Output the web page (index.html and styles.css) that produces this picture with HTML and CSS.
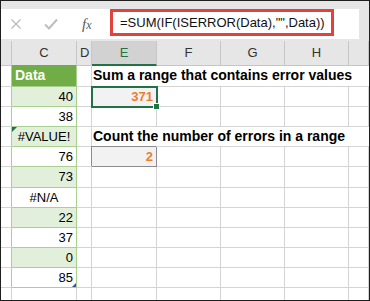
FILE: index.html
```html
<!DOCTYPE html>
<html lang="en">
<head>
    <meta charset="UTF-8">
    <title>SUM ignoring errors</title>
    <link rel="stylesheet" href="styles.css">
</head>
<body>
    <div class="frame">
        <div class="band"></div>

        <!-- formula bar -->
        <div class="fbar">
            <div class="fbar-icons">
                <svg class="ico-x" width="12" height="12" viewBox="0 0 12 12">
                    <path d="M1.5 1.5 L10.5 10.5 M10.5 1.5 L1.5 10.5" stroke="#bdbdbd" stroke-width="1.4" fill="none"/>
                </svg>
                <svg class="ico-ok" width="14" height="12" viewBox="0 0 14 12">
                    <path d="M1 6.5 L5 10.5 L13 1.5" stroke="#bdbdbd" stroke-width="2" fill="none"/>
                </svg>
                <span class="fx">f<span>x</span></span>
            </div>
            <div class="formula">=SUM(IF(ISERROR(Data),"",Data))</div>
        </div>

        <div class="sheet">
            <div class="row head">
                <div></div><div>C</div><div>D</div><div class="sel">E</div><div>F</div><div>G</div><div>H</div><div></div>
            </div>
            <div class="row r1 tbl">
                <div></div><div class="c th">Data</div><div></div>
                <div class="title">Sum a range that contains error values</div>
            </div>
            <div class="row tbl">
                <div></div><div class="c band-g">40</div><div></div>
                <div class="num active">371<span class="handle"></span></div>
                <div></div><div></div><div></div><div></div>
            </div>
            <div class="row tbl">
                <div></div><div class="c">38</div><div></div>
                <div></div><div></div><div></div><div></div><div></div>
            </div>
            <div class="row tbl">
                <div></div><div class="c band-g err">#VALUE!<span class="flag"></span></div><div></div>
                <div class="title">Count the number of errors in a range</div>
            </div>
            <div class="row tbl">
                <div></div><div class="c">76</div><div></div>
                <div class="num boxed">2</div>
                <div></div><div></div><div></div><div></div>
            </div>
            <div class="row tbl tall">
                <div></div><div class="c band-g">73</div><div></div>
                <div></div><div></div><div></div><div></div><div></div>
            </div>
            <div class="row tbl">
                <div></div><div class="c err">#N/A</div><div></div>
                <div></div><div></div><div></div><div></div><div></div>
            </div>
            <div class="row tbl">
                <div></div><div class="c band-g">22</div><div></div>
                <div></div><div></div><div></div><div></div><div></div>
            </div>
            <div class="row tbl">
                <div></div><div class="c">37</div><div></div>
                <div></div><div></div><div></div><div></div><div></div>
            </div>
            <div class="row tbl">
                <div></div><div class="c band-g">0</div><div></div>
                <div></div><div></div><div></div><div></div><div></div>
            </div>
            <div class="row tbl">
                <div></div><div class="c last">85<span class="resize"></span></div><div></div>
                <div></div><div></div><div></div><div></div><div></div>
            </div>
            <div class="row">
                <div></div><div></div><div></div>
                <div></div><div></div><div></div><div></div><div></div>
            </div>
        </div>
    </div>
</body>
</html>
```

FILE: styles.css
```css
body {
    margin: 0;
    font-family: "Liberation Sans", Arial, sans-serif;
}
.frame {
    width: 370px;
    height: 301px;
    box-sizing: border-box;
    border: 1px solid #1e1e1e;
    background-color: #e6e6e6;
    overflow: hidden;
}
.band {
    height: 8px;
}

/* formula bar */
.fbar {
    display: flex;
    height: 30px;
    margin-right: 10px;
    background-color: white;
}
.fbar-icons {
    width: 109px;
    display: flex;
    align-items: center;
}
.ico-x {
    margin-left: 9px;
}
.ico-ok {
    margin-left: 22px;
}
.fx {
    margin-left: 24px;
    font-family: "Liberation Serif", serif;
    font-style: italic;
    font-size: 15px;
    color: #595959;
}
.fx span {
    font-size: 12px;
}
.formula {
    width: 224px;
    height: 27px;
    box-sizing: border-box;
    border: 3px solid #e2413c;
    padding-left: 7px;
    font-size: 13px;
    line-height: 21px;
    color: #111;
}

.sheet {
    margin-top: 2px;
    background-color: white;
}
.row {
    display: grid;
    grid-template-columns: 11px 65px 15px 65px 64px 64px 64px 1fr;
    height: 20px;
}
.row > div {
    box-sizing: border-box;
    border-right: 1px solid #d4d4d4;
    border-bottom: 1px solid #d4d4d4;
    font-size: 13px;
    line-height: 19px;
    padding: 0 3px;
    white-space: nowrap;
    position: relative;
}
.row.r1 {
    height: 22px;
}
.row.r1 > div {
    line-height: 21px;
}
.row.tall {
    height: 21px;
}

/* column headers */
.row.head {
    height: 24px;
    background-color: #e6e6e6;
}
.row.head > div {
    border-right-color: #c6c6c6;
    border-bottom-color: #c6c6c6;
    text-align: center;
    line-height: 23px;
    color: #333;
}
.row.head > .sel {
    background-color: #d2d2d2;
    color: #217346;
    border-bottom: 2px solid #217346;
}

/* table in column C */
.tbl > div:first-child {
    border-right-color: #a9d08e;
}
.c {
    text-align: right;
    border-right-color: #a9d08e !important;
    border-bottom-color: #a9d08e !important;
}
.c.th {
    background-color: #70ad47;
    color: white;
    font-weight: bold;
    font-size: 14px;
    text-align: left;
}
.band-g {
    background-color: #e2efda;
}
.c.err {
    text-align: center;
}
.flag {
    position: absolute;
    left: 0;
    top: 0;
    border-top: 5px solid #217346;
    border-right: 5px solid transparent;
}
.resize {
    position: absolute;
    right: 0;
    bottom: 0;
    border-bottom: 4px solid #3d4f9e;
    border-left: 4px solid transparent;
}

/* text spilling over E:H */
.row > .title {
    grid-column: 4 / -1;
    border-right: none;
    font-weight: bold;
    font-size: 14px;
    color: #000;
    padding-left: 1px;
}
.num {
    text-align: right;
    font-weight: bold;
    color: #ed7d31;
    background-color: #f2f2f2;
}
.active {
    outline: 2px solid #217346;
    outline-offset: -1px;
    z-index: 1;
}
.handle {
    position: absolute;
    right: -4px;
    bottom: -4px;
    width: 5px;
    height: 5px;
    background-color: #217346;
    border: 1px solid white;
}
.row > .boxed {
    border-right-color: #8c8c8c;
    border-bottom-color: #8c8c8c;
    box-shadow: -1px -1px 0 #8c8c8c;
}
```
